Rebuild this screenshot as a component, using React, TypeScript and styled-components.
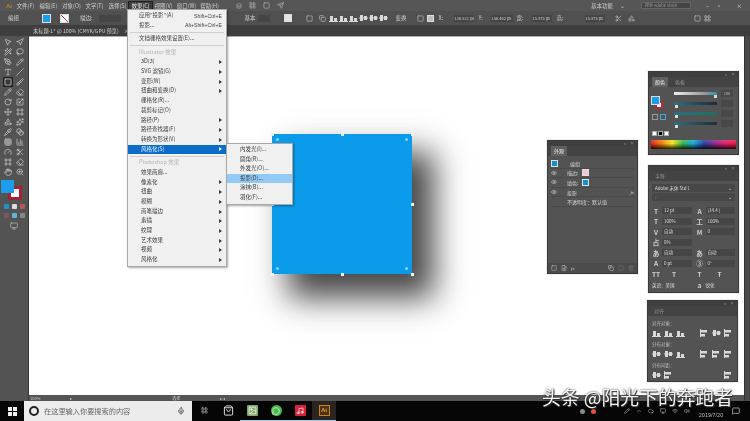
import React from "react";
import styled, { createGlobalStyle } from "styled-components";
import {
  MousePointer2, Navigation, Wand2, Lasso, PenTool, Pencil, Brush, Eraser, Type, Slash, Square, RotateCw,
  Scaling, Move, Pipette, Blend, Hand, ZoomIn, Grid3x3, BarChart3, Scissors, Shapes, Eye, Mic, Monitor,
  ShoppingBag, Image as ImageIcon, MessageCircle, Music, ChevronUp, Cloud, Wifi, Volume2, MessageSquare, Layers, Send, LayoutGrid, Trash2, FilePlus, Copy, Frame, Gauge, Sparkles
} from "lucide-react";

const Global = createGlobalStyle`
  html, body { margin: 0; padding: 0; background: #000; }
  * { box-sizing: border-box; }
`;

const Root = styled.div`
  position: relative; width: 750px; height: 421px; overflow: hidden; display: flex; flex-direction: column;
  font-family: "Noto Sans CJK SC", "Liberation Sans", sans-serif; font-size: 5.5px; color: #ddd; background: #535353;
  filter: blur(0.55px);
`;
const MenuBar = styled.div`
  height: 11px; flex: none; background: #565656; display: flex; align-items: center; padding-left: 6px;
`;
const Logo = styled.span`font: bold 6px "Liberation Sans", sans-serif; color: #b9802f; width: 8px;`;
const MenuName = styled.span<{ $active?: boolean }>`
  width: 23px; text-align: center; color: ${p => p.$active ? "#eee" : "#cfcfcf"}; white-space: nowrap; line-height: 9px; height: 9px; margin-top: 1px;
  background: ${p => p.$active ? "#3c3c3c" : "none"}; outline: ${p => p.$active ? "1px solid #222" : "none"};
`;
const MenuTools = styled.div`display: flex; gap: 7px; margin-left: 15px; color: #bbb; align-items: center;`;
const MenuRight = styled.div`margin-left: auto; display: flex; align-items: center; gap: 7px; padding-right: 8px; color: #ccc;`;
const SearchField = styled.span`width: 50px; height: 7px; background: #454545; border: 1px solid #666; font-size: 4px; line-height: 5px; color: #999; padding-left: 3px; white-space: nowrap; overflow: hidden;`;
const ControlBar = styled.div`
  height: 14px; flex: none; background: #505050; display: flex; align-items: center; padding-left: 8px; color: #cfcfcf; position: relative;
`;
const Swatch = styled.span<{ $c: string; $w?: number; $h?: number; $ml?: number }>`
  display: inline-block; flex: none; width: ${p => p.$w ?? 9}px; height: ${p => p.$h ?? 9}px; background: ${p => p.$c};
  margin-left: ${p => p.$ml ?? 0}px; border: 1px solid #ddd;
`;
const NoStroke = styled(Swatch)`
  background: linear-gradient(45deg, #fff 44%, #d8334a 44%, #d8334a 56%, #fff 56%);
`;
const Field = styled.span<{ $w: number; $ml?: number }>`
  display: inline-block; flex: none; width: ${p => p.$w}px; height: 7px; background: #454545; margin-left: ${p => p.$ml ?? 2}px; font-size: 4px; line-height: 7px; color: #ccc; padding-left: 1px; white-space: nowrap; overflow: hidden;
`;
const FieldLabel = styled.span<{ $w: number }>`flex: none; width: ${p => p.$w}px; white-space: nowrap;`;
const Gap = styled.span<{ $w: number }>`display: inline-block; flex: none; width: ${p => p.$w}px;`;
const BarIcon = styled.span<{ $w?: number }>`
  display: inline-flex; flex: none; width: ${p => p.$w ?? 13}px; justify-content: center; color: #c8c8c8;
`;
const TabBar = styled.div`
  height: 11px; flex: none; background: #3e3e3e; display: flex; align-items: center; padding-left: 33px; color: #d0d0d0; gap: 5px; font-size: 5.2px;
`;
const Main = styled.div`flex: 1; display: flex; min-height: 0;`;
const Tools = styled.div`
  width: 29px; flex: none; background: #535353; border-right: 1px solid #3a3a3a; display: flex; flex-direction: column; align-items: center; padding-top: 1px;
`;
const ToolGrid = styled.div`
  display: grid; grid-template-columns: 12px 12px; grid-auto-rows: 10px; place-items: center; color: #d2d2d2;
`;
const ActiveTool = styled.span`display: inline-flex; outline: 1px solid #222; background: #3a3a3a;`;
const FillStack = styled.div`position: relative; width: 21px; height: 20px; margin: 3px 5px 0 0; flex: none;`;
const FillFront = styled.span`position: absolute; left: 0; top: 0; width: 13px; height: 13px; background: #1a9eec; z-index: 1;`;
const StrokeBack = styled.span`
  position: absolute; left: 7px; top: 6px; width: 14px; height: 14px; background: #fff; border: 3px solid #a2222f;
`;
const ToolRow = styled.div`display: flex; gap: 3px; margin-top: 4px; align-items: center;`;
const Dot = styled.span<{ $c: string }>`width: 5px; height: 5px; background: ${p => p.$c}; border-radius: 1px; display: block;`;
const CanvasCol = styled.div`flex: 1; display: flex; flex-direction: column; min-width: 0;`;
const Canvas = styled.div`flex: 1; position: relative; background: #fff; border-top: 1px solid #aaa;`;
const StatusBar = styled.div`
  height: 6px; flex: none; background: #555; display: flex; align-items: center; color: #ccc; font-size: 4px; padding-left: 1px;
`;
const Dock = styled.div`width: 6px; flex: none; background: #494949; border-left: 1px solid #333;`;

const Art = styled.div`
  position: absolute; left: 243px; top: 97px; width: 140px; height: 140px; background: #0a9bea;
  box-shadow: 19px 21px 30px 3px rgba(30,30,30,.82);
`;
const Handle = styled.span<{ $x: number; $y: number; $inner?: boolean }>`
  position: absolute; left: ${p => p.$x}%; top: ${p => p.$y}%; width: 3px; height: 3px; margin: -1.5px;
  background: ${p => p.$inner ? "#8fd3fb" : "#e8f6ff"}; border-radius: ${p => p.$inner ? "50%" : "0"};
`;

const Menu = styled.div<{ $x: number; $y: number; $w: number }>`
  position: absolute; left: ${p => p.$x}px; top: ${p => p.$y}px; width: ${p => p.$w}px; background: #f0f0f0;
  border: 1px solid #a8a8a8; color: #333; box-shadow: 1px 1px 2px rgba(0,0,0,.35); padding: 1px 0; z-index: 5;
`;
const Item = styled.div<{ $active?: boolean; $soft?: boolean; $muted?: boolean; $h?: number; $indent?: number }>`
  height: ${p => p.$h ?? 9.7}px; line-height: ${p => p.$h ?? 9.7}px; display: flex; align-items: center;
  padding: 0 4px 0 ${p => p.$indent ?? 13}px; white-space: nowrap;
  background: ${p => p.$active ? "#0a6cc8" : p.$soft ? "#92c9f5" : "none"};
  color: ${p => p.$active ? "#eef6ff" : p.$muted ? "#b5b5b5" : "#3a3a3a"};
`;
const Shortcut = styled.span`margin-left: auto; letter-spacing: 0; font: 5.2px "Liberation Sans", sans-serif; color: #444;`;
const Arrow = styled.span`margin-left: auto; width: 0; height: 0; border-left: 3px solid currentColor; border-top: 2px solid transparent; border-bottom: 2px solid transparent;`;
const Sep = styled.div<{ $my?: number }>`height: 1px; background: #cfcfcf; margin: ${p => p.$my ?? 1.5}px 2px;`;

const Panel = styled.div<{ $x: number; $y: number; $w: number; $h: number }>`
  position: absolute; left: ${p => p.$x}px; top: ${p => p.$y}px; width: ${p => p.$w}px; height: ${p => p.$h}px;
  background: #535353; border: 1px solid #3a3a3a; display: flex; flex-direction: column; color: #d4d4d4; box-shadow: 0 0 1px #999;
`;
const PanelTop = styled.div`height: 5px; flex: none; background: #3f3f3f; display: flex; justify-content: flex-end; gap: 4px; padding-right: 3px; font-size: 4px; line-height: 5px; color: #aaa;`;
const PanelTabs = styled.div`height: 10px; flex: none; background: #434343; display: flex; align-items: stretch; padding-left: 3px; gap: 4px; font-size: 5px;`;
const PanelTab = styled.span<{ $on?: boolean }>`padding: 0 3px; line-height: 10px; background: ${p => p.$on ? "#606060" : "none"}; color: ${p => p.$on ? "#eee" : "#999"};`;
const Rows = styled.div<{ $pt?: number; $gap?: number; $px?: number }>`
  display: flex; flex-direction: column; gap: ${p => p.$gap ?? 0}px; padding: ${p => p.$pt ?? 3}px ${p => p.$px ?? 3}px 0; flex: 1; min-height: 0;
`;
const ARow = styled.div`height: 9.6px; display: flex; align-items: center; font-size: 5px; gap: 3px; border-bottom: 1px solid #4a4a4a;`;
const Thumb = styled.span<{ $ml?: number; $c?: string }>`width: 7px; height: 7px; flex: none; background: ${p => p.$c ?? "#1590cf"}; border: 1px solid #dfdfdf; margin-left: ${p => p.$ml ?? 0}px;`;
const Label = styled.span<{ $ml?: number }>`margin-left: ${p => p.$ml ?? 0}px; white-space: nowrap;`;
const Fx = styled.span<{ $flat?: boolean }>`margin-left: ${p => p.$flat ? "0" : "auto"}; font: italic 5px "Liberation Serif", serif; color: #ccc;`;
const Footer = styled.div`height: 10px; flex: none; background: #4b4b4b; display: flex; align-items: center; padding: 0 3px; gap: 4px; color: #ccc;`;
const Spacer = styled.span`flex: 1;`;

const SliderRow = styled.div`display: flex; align-items: center; height: 10px; gap: 3px;`;
const Slider = styled.span<{ $light?: boolean; $tone?: string; $pos: number }>`
  position: relative; width: 43px; height: 3px; flex: none; background: ${p => p.$light ? "linear-gradient(90deg,#eee,#999 70%,#2a8fb0)" : `linear-gradient(90deg,#2c6f82,${p.$tone ?? "#27515f"})`};
  &::after { content: ""; position: absolute; left: ${p => p.$pos}%; top: 3px; width: 3px; height: 3px; background: #ddd; }
`;
const SmallBox = styled.span`width: 12px; height: 7px; flex: none; background: #484848; margin-left: 1px; font-size: 4px; line-height: 7px; text-align: center; color: #bbb;`;
const ColorTop = styled.div`display: flex; gap: 3px; padding: 1px 2px 0 2px;`;
const Swatches = styled.div`position: relative; width: 14px; height: 40px; flex: none;`;
const ColorFill = styled.span`position: absolute; left: 0; top: 8px; width: 9px; height: 9px; background: #1a9eec; border: 1px solid #ddd; z-index: 1;`;
const ColorStroke = styled.span`position: absolute; left: 4px; top: 13px; width: 8px; height: 8px; background: #fff; border: 2px solid #b32b36;`;
const ModeBox = styled.span<{ $x: number; $blue?: boolean }>`position: absolute; left: ${p => p.$x}px; top: 26px; width: 6px; height: 6px; border: 1px solid ${p => p.$blue ? "#4aa4d8" : "#999"};`;
const SliderCol = styled.div`display: flex; flex-direction: column; margin-left: 6px;`;
const Chips = styled.div`display: flex; gap: 1px; padding: 3px 3px 0;`;
const Chip = styled.span<{ $c: string }>`width: 5px; height: 5px; background: ${p => p.$c}; border: 1px solid #aaa;`;
const Spectrum = styled.div`
  height: 9px; margin: 4px 2px 0; background:
    linear-gradient(180deg, rgba(255,255,255,.15), rgba(0,0,0,0) 40%, rgba(0,0,0,.85)),
    linear-gradient(90deg,#e02020,#f07d10,#f6e51b,#38b54a,#1aa5d8,#2b3fa0,#8d2a90,#e0206a,#e02040);
`;
const FontRow = styled.div`height: 8px; background: #474747; display: flex; align-items: center; justify-content: space-between; padding: 0 3px; font-size: 4.5px; color: #ddd; margin-bottom: 1px;`;
const CharGrid = styled.div`display: grid; grid-template-columns: 1fr 1fr; column-gap: 4px; row-gap: 1.6px; margin-top: 4px;`;
const CharCell = styled.div<{ $span?: boolean }>`display: flex; align-items: center; height: 9px; font-size: 4.5px; gap: 2px; color: #ddd; white-space: nowrap; grid-column: ${p => p.$span ? "1 / 2" : "auto"};`;
const Glyph = styled.span`font: bold 6.5px "Noto Sans CJK SC", sans-serif; color: #cfcfcf; width: 8px; flex: none; text-align: center;`;
const CharField = styled.span`flex: 1; background: #464646; height: 7px; line-height: 7px; padding-left: 2px; overflow: hidden;`;
const Section = styled.div`font-size: 4.5px; color: #bbb; height: 7px; line-height: 7px; margin-top: 3px;`;
const AlignRow = styled.div`display: flex; align-items: center; height: 11px; gap: 3px; color: #ddd;`;

const Taskbar = styled.div`height: 20px; flex: none; background: #060606; display: flex; align-items: center; position: relative;`;
const StartBtn = styled.div`width: 24px; display: flex; justify-content: center; flex: none;`;
const WinGrid = styled.span`display: grid; grid-template-columns: 4px 4px; grid-auto-rows: 4px; gap: 1px;`;
const WinPane = styled.span`background: #f0f0f0;`;
const SearchBox = styled.div`
  width: 168px; height: 20px; flex: none; background: #ececec; display: flex; align-items: center; padding: 0 7px 0 5px; color: #666; font-size: 7.2px; gap: 5px;
`;
const Ring = styled.span`width: 10px; height: 10px; flex: none; border: 2px solid #222; border-radius: 50%;`;
const MicWrap = styled.span`margin-left: auto; display: inline-flex; color: #333;`;
const TaskIcons = styled.div`display: flex; align-items: center; height: 100%;`;
const TaskBtn = styled.span<{ $w?: number; $on?: boolean; $open?: boolean }>`
  width: ${p => p.$w ?? 24}px; height: 100%; display: flex; align-items: center; justify-content: center;
  background: ${p => p.$on ? "#2a2522" : "none"};
  border-bottom: 1px solid ${p => p.$open ? "#a8cfe8" : "transparent"};
`;
const AppTile = styled.span<{ $c: string; $round?: boolean }>`
  width: 11px; height: 11px; background: ${p => p.$c}; border-radius: ${p => p.$round ? "50%" : "1px"}; display: flex; align-items: center; justify-content: center; color: #fff;
`;
const AiTile = styled.span`width: 11px; height: 11px; background: #4e3212; border: 1px solid #c9822a; color: #e39a3c; font: bold 6px "Liberation Sans", sans-serif; line-height: 9px; text-align: center;`;
const Tray = styled.div`margin-left: auto; display: flex; align-items: center; gap: 6px; color: #bbb; padding-right: 10px;`;
const TrayDot = styled.span<{ $c: string }>`width: 5px; height: 5px; flex: none; border-radius: 50%; background: ${p => p.$c};`;
const DateText = styled.span`font: 5.5px "Liberation Sans", sans-serif; color: #bbb; margin-top: 8px; width: 30px; text-align: center;`;
const Watermark = styled.div`
  position: absolute; left: 542px; top: 385px; z-index: 8; color: #f4f4f4; font-size: 18.8px; line-height: 24px; white-space: nowrap;
  text-shadow: 0 0 2px #222, 1px 1px 1px #333;
`;

const toolIcons = [MousePointer2, Navigation, Wand2, Lasso, PenTool, Pencil, Type, Slash, Square, Brush, Pencil, Eraser, RotateCw, Scaling, Move, Frame, Shapes, Sparkles, Pipette, Blend, Grid3x3, BarChart3, Gauge, Scissors, Frame, Eraser, Hand, ZoomIn];
const menuNames = ["文件(F)", "编辑(E)", "对象(O)", "文字(T)", "选择(S)", "效果(C)", "视图(V)", "窗口(W)", "帮助(H)"];
const illustrator: [string, boolean][] = [["3D(3)", true], ["SVG 滤镜(G)", true], ["变形(W)", true], ["扭曲和变换(D)", true], ["栅格化(R)...", false], ["裁剪标记(O)", false], ["路径(P)", true], ["路径查找器(F)", true], ["转换为形状(V)", true]];
const photoshop: [string, boolean][] = [["效果画廊...", false], ["像素化", true], ["扭曲", true], ["模糊", true], ["画笔描边", true], ["素描", true], ["纹理", true], ["艺术效果", true], ["视频", true], ["风格化", true]];
const stylize = ["内发光(I)...", "圆角(R)...", "外发光(O)...", "投影(D)...", "涂抹(B)...", "羽化(F)..."];
const handles = [[0, 0], [50, 0], [100, 0], [0, 50], [100, 50], [0, 100], [50, 100], [100, 100]];
const inner = [[4, 4], [96, 4], [4, 96], [96, 96]];

const AlignGlyph = ({ v }: { v: number }) => (
  <svg width="9" height="8" viewBox="0 0 9 8" fill="#d8d8d8">
    {v === 0 && <><rect x="0" y="7" width="9" height="1" /><rect x="1" y="2" width="3" height="5" /><rect x="5" y="4" width="3" height="3" /></>}
    {v === 1 && <><rect x="0" y="3.5" width="9" height="1" /><rect x="1" y="1" width="3" height="6" /><rect x="5" y="2" width="3" height="4" /></>}
    {v === 2 && <><rect x="0" y="0" width="1" height="8" /><rect x="1" y="1" width="6" height="2.5" /><rect x="1" y="5" width="4" height="2.5" /></>}
  </svg>
);

export default function App() {
  return (
    <Root>
      <Global />
      <MenuBar>
        <Logo>Ai</Logo>
        {menuNames.map(n => <MenuName key={n} $active={n === "效果(C)"}>{n}</MenuName>)}
        <MenuTools>
          <Layers size={6} /><LayoutGrid size={7} /><Square size={7} /><Send size={7} />
        </MenuTools>
        <MenuRight>
          <span>基本功能</span><span>⌄</span><Gap $w={2} /><SearchField>搜索 Adobe Stock</SearchField>
          <Gap $w={1} /><span>–</span><span>▫</span><Gap $w={1} /><span>×</span>
        </MenuRight>
      </MenuBar>
      <ControlBar>
        <span>编组</span>
        <Swatch $c="#1a9eec" $ml={23} />
        <Gap $w={9} />
        <NoStroke $c="#fff" />
        <Gap $w={11} />
        <span>描边:</span>
        <Field $w={22} $ml={6} />
        <Gap $w={124} />
        <span>基本</span>
        <Field $w={12} />
        <Gap $w={14} />
        <Swatch $c="#e4e4e4" $w={8} $h={8} />
        <Gap $w={11} />
        <BarIcon><Square size={7} /></BarIcon>
        <BarIcon><Copy size={7} /></BarIcon>
        {[0, 0, 0, 1, 1, 1].map((v, i) => <BarIcon key={i} $w={10}><AlignGlyph v={v} /></BarIcon>)}
        <Gap $w={7} />
        <span>变换</span>
        <Gap $w={8} />
        <BarIcon $w={12}><Square size={7} /></BarIcon>
        <Swatch $c="#bdbdbd" $w={7} $h={7} />
        <Gap $w={5} />
        <FieldLabel $w={13}>X:</FieldLabel><Field $w={20}>136.521 px</Field>
        <Gap $w={5} />
        <FieldLabel $w={10}>Y:</FieldLabel><Field $w={22}>156.462 px</Field>
        <Gap $w={4} />
        <FieldLabel $w={13}>宽:</FieldLabel><Field $w={20}>15.875 px</Field>
        <Gap $w={5} />
        <FieldLabel $w={26}>高:</FieldLabel><Field $w={20}>15.875 px</Field>
        <Gap $w={7} />
        <BarIcon><Scissors size={7} /></BarIcon>
        <BarIcon><Shapes size={7} /></BarIcon>
        <Gap $w={55} />
        <BarIcon $w={10}><Square size={7} /></BarIcon>
        <BarIcon $w={10}><LayoutGrid size={7} /></BarIcon>
      </ControlBar>
      <TabBar>
        <span>未标题-1* @ 100% (CMYK/GPU 预览)</span><span>×</span>
      </TabBar>
      <Main>
        <Tools>
          <ToolGrid>
            {toolIcons.map((I, i) => i === 8
              ? <ActiveTool key={i}><I size={8} /></ActiveTool>
              : <I key={i} size={8} />)}
          </ToolGrid>
          <FillStack><FillFront /><StrokeBack /></FillStack>
          <ToolRow><Dot $c="#1892c9" /><Dot $c="#ddd" /><Dot $c="#b8555d" /></ToolRow>
          <ToolRow><Dot $c="#7b5560" /><Dot $c="#5fb4d8" /><Dot $c="#888" /></ToolRow>
          <ToolRow><Monitor size={8} color="#bbb" /></ToolRow>
        </Tools>
        <CanvasCol>
          <Canvas>
            <Art>
              {handles.map(([x, y], i) => <Handle key={i} $x={x} $y={y} />)}
              {inner.map(([x, y], i) => <Handle key={i} $x={x} $y={y} $inner />)}
            </Art>

            <Panel $x={518} $y={103} $w={91} $h={134}>
              <PanelTop><span>«</span><span>×</span></PanelTop>
              <PanelTabs><PanelTab $on>外观</PanelTab></PanelTabs>
              <Rows $pt={3}>
                <ARow><Thumb /><Label $ml={9}>编组</Label></ARow>
                <ARow><Eye size={6} /><Label $ml={7}>描边:</Label><Thumb $ml={1} $c="#f2c6cc" /></ARow>
                <ARow><Eye size={6} /><Label $ml={7}>填色:</Label><Thumb $ml={1} /></ARow>
                <ARow><Eye size={6} /><Label $ml={7}>投影</Label><Fx>fx</Fx></ARow>
                <ARow><Gap $w={6} /><Label $ml={7}>不透明度：默认值</Label></ARow>
              </Rows>
              <Footer>
                <Square size={6} /><FilePlus size={6} /><Fx $flat>fx</Fx>
                <Spacer /><Copy size={6} /><Square size={6} color="#777" /><Trash2 size={6} color="#777" />
              </Footer>
            </Panel>

            <Panel $x={619} $y={34} $w={91} $h={84}>
              <PanelTop><span>«</span><span>×</span></PanelTop>
              <PanelTabs><PanelTab $on>颜色</PanelTab><PanelTab>色板</PanelTab></PanelTabs>
              <ColorTop>
                <Swatches>
                  <ColorFill /><ColorStroke />
                  <ModeBox $x={1} /><ModeBox $x={9} $blue />
                </Swatches>
                <SliderCol>
                  <SliderRow><Slider $light $pos={92} /><SmallBox>100</SmallBox></SliderRow>
                  <SliderRow><Slider $tone="#1d2a44" $pos={2} /><SmallBox /></SliderRow>
                  <SliderRow><Slider $tone="#1f6f5e" $pos={2} /><SmallBox /></SliderRow>
                  <SliderRow><Slider $tone="#202c3a" $pos={2} /><SmallBox /></SliderRow>
                </SliderCol>
              </ColorTop>
              <Chips><Chip $c="#fff" /><Chip $c="#000" /><Chip $c="#fff" /></Chips>
              <Spectrum />
            </Panel>

            <Panel $x={619} $y={128} $w={91} $h={128}>
              <PanelTop><span>«</span><span>×</span></PanelTop>
              <PanelTabs><PanelTab>字符</PanelTab></PanelTabs>
              <Rows $pt={3} $px={3}>
                <FontRow><span>Adobe 宋体 Std L</span><span>⌄</span></FontRow>
                <FontRow><span>-</span><span>⌄</span></FontRow>
                <CharGrid>
                  <CharCell><Glyph>T</Glyph><CharField>12 pt</CharField></CharCell>
                  <CharCell><Glyph>A</Glyph><CharField>(14.4 )</CharField></CharCell>
                  <CharCell><Glyph>T</Glyph><CharField>100%</CharField></CharCell>
                  <CharCell><Glyph>工</Glyph><CharField>100%</CharField></CharCell>
                  <CharCell><Glyph>V</Glyph><CharField>自动</CharField></CharCell>
                  <CharCell><Glyph>M</Glyph><CharField>0</CharField></CharCell>
                  <CharCell $span><Glyph>占</Glyph><CharField>0%</CharField></CharCell>
                  <CharCell />
                  <CharCell><Glyph>あ</Glyph><CharField>自动</CharField></CharCell>
                  <CharCell><Glyph>あ</Glyph><CharField>自动</CharField></CharCell>
                  <CharCell><Glyph>A</Glyph><CharField>0 pt</CharField></CharCell>
                  <CharCell><Glyph>③</Glyph><CharField>0°</CharField></CharCell>
                  <CharCell><Glyph>TT</Glyph><Gap $w={6} /><Glyph>T</Glyph></CharCell>
                  <CharCell><Glyph>T</Glyph><Gap $w={8} /><Glyph>Ŧ</Glyph></CharCell>
                  <CharCell><span>英语：美国</span></CharCell>
                  <CharCell><Glyph>a</Glyph><span>锐化</span></CharCell>
                </CharGrid>
              </Rows>
            </Panel>

            <Panel $x={618} $y={263} $w={91} $h={82}>
              <PanelTop><span>«</span><span>×</span></PanelTop>
              <PanelTabs><PanelTab>对齐</PanelTab></PanelTabs>
              <Rows $pt={1} $px={4}>
                <Section>对齐对象：</Section>
                <AlignRow>
                  <AlignGlyph v={0} /><AlignGlyph v={0} /><AlignGlyph v={0} /><Gap $w={9} />
                  <AlignGlyph v={2} /><AlignGlyph v={1} /><AlignGlyph v={2} />
                </AlignRow>
                <Section>分布对象：</Section>
                <AlignRow>
                  <AlignGlyph v={1} /><AlignGlyph v={1} /><AlignGlyph v={0} /><Gap $w={9} />
                  <AlignGlyph v={2} /><AlignGlyph v={2} /><AlignGlyph v={2} />
                </AlignRow>
                <Section>分布间距：</Section>
                <AlignRow>
                  <AlignGlyph v={1} /><AlignGlyph v={2} /><Spacer /><AlignGlyph v={2} />
                </AlignRow>
              </Rows>
            </Panel>
          </Canvas>
          <StatusBar>
            <span>100%</span><Gap $w={30} /><span>▸</span><Gap $w={100} /><span>选择</span><Gap $w={40} /><span>▸ ◂</span>
          </StatusBar>
        </CanvasCol>
        <Dock />
      </Main>
      <Taskbar>
        <StartBtn><WinGrid><WinPane /><WinPane /><WinPane /><WinPane /></WinGrid></StartBtn>
        <SearchBox>
          <Ring /><span>在这里输入你要搜索的内容</span>
          <MicWrap><Mic size={8} /></MicWrap>
        </SearchBox>
        <TaskIcons>
          <TaskBtn><LayoutGrid size={7} color="#ccc" /></TaskBtn>
          <TaskBtn><ShoppingBag size={11} color="#eee" /></TaskBtn>
          <TaskBtn $open><AppTile $c="#7fa868"><ImageIcon size={9} /></AppTile></TaskBtn>
          <TaskBtn $open><AppTile $c="#4cb848" $round><MessageCircle size={8} /></AppTile></TaskBtn>
          <TaskBtn $open><AppTile $c="#d8203c"><Music size={8} /></AppTile></TaskBtn>
          <TaskBtn $on $open><AiTile>Ai</AiTile></TaskBtn>
        </TaskIcons>
        <Tray>
          <TrayDot $c="#8a8a8a" /><TrayDot $c="#e8503a" /><Gap $w={16} />
          <Pencil size={6} /><ChevronUp size={6} /><Cloud size={6} /><Monitor size={6} /><Wifi size={6} /><Volume2 size={6} />
          <DateText>2019/7/20</DateText>
          <MessageSquare size={8} color="#ddd" />
        </Tray>
      </Taskbar>

      <Menu $x={127} $y={9} $w={100}>
        <Item $indent={11} $h={9.5}><span>应用"投影"(A)</span><Shortcut>Shift+Ctrl+E</Shortcut></Item>
        <Item $indent={11} $h={9.5}><span>投影...</span><Shortcut>Alt+Shift+Ctrl+E</Shortcut></Item>
        <Sep />
        <Item $indent={11}>文档栅格效果设置(E)...</Item>
        <Sep />
        <Item $indent={11} $muted>Illustrator 效果</Item>
        {illustrator.map(([t, a]) => <Item key={t}><span>{t}</span>{a && <Arrow />}</Item>)}
        <Item $active><span>风格化(S)</span><Arrow /></Item>
        <Sep />
        <Item $indent={11} $muted>Photoshop 效果</Item>
        {photoshop.map(([t, a]) => <Item key={t}><span>{t}</span>{a && <Arrow />}</Item>)}
      </Menu>
      <Menu $x={226} $y={143} $w={67}>
        {stylize.map((t, i) => <Item key={t} $indent={13} $soft={i === 3} $h={9.6}>{t}</Item>)}
      </Menu>

      <Watermark>头条 @阳光下的奔跑者</Watermark>
    </Root>
  );
}
